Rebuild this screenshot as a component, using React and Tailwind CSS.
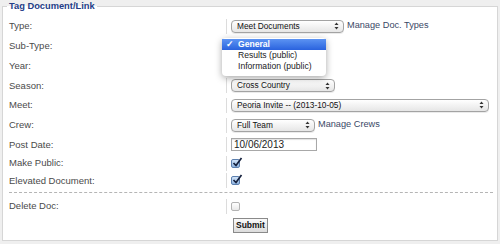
const font = { fontFamily: '"Liberation Sans", Arial, sans-serif' }

function Arrows() {
  return (
    <svg width="5" height="8" viewBox="0 0 5 8" className="shrink-0">
      <path d="M2.5 0.5 L4.5 3 L0.5 3 Z" fill="#333" />
      <path d="M2.5 7.5 L4.5 5 L0.5 5 Z" fill="#333" />
    </svg>
  )
}

function Select({ w, children }) {
  return (
    <div
      className="h-[13px] rounded-[4px] border border-[#a3a3a3] bg-gradient-to-b from-white to-[#e6e6e6] shadow-[0_1px_0_rgba(0,0,0,0.08)] flex items-center justify-between pl-[5px] pr-[4px] text-[8.3px] text-[#111] leading-none"
      style={{ width: w }}
    >
      <span>{children}</span>
      <Arrows />
    </div>
  )
}

function Check({ checked }) {
  return (
    <div
      className={
        'w-[9px] h-[9px] rounded-[2px] border relative ' +
        (checked
          ? 'border-[#5b7fae] bg-gradient-to-b from-[#d2e4f8] to-[#8fb4e0]'
          : 'border-[#b3b3b3] bg-gradient-to-b from-white to-[#e9e9e9]')
      }
    >
      {checked && (
        <svg width="11" height="11" viewBox="0 0 11 11" className="absolute left-[0px] top-[-3px]">
          <path d="M1.5 6 L4 8.5 L9.5 1" fill="none" stroke="#15213d" strokeWidth="1.7" />
        </svg>
      )}
    </div>
  )
}

function Row({ label, h = 20, line = true, children }) {
  return (
    <div className="flex items-center" style={{ height: h }}>
      <div className="w-[223px] pl-[6px] text-[9.5px] text-[#4a4a4a] leading-none">{label}</div>
      {line ? (
        <div className="h-[15px] border-l border-[#dcdcdc] pl-[4px] flex items-center gap-[3px]">{children}</div>
      ) : (
        <div className="pl-[4px] flex items-center">{children}</div>
      )}
    </div>
  )
}

function Link({ children }) {
  return <span className="text-[9.2px] text-[#3a4866] leading-none">{children}</span>
}

export default function App() {
  return (
    <div className="relative w-[500px] h-[244px] bg-[#efefef] overflow-hidden" style={font}>
      <fieldset className="ml-[2px] w-[496px] h-[241px] border border-[#d6d6d6] bg-white">
        <legend className="ml-[4px] px-[2px] text-[9.3px] font-bold text-[#243d87] leading-[12px]">
          Tag Document/Link
        </legend>
        <div className="pt-[4px]">
          <Row label="Type:">
            <Select w={113}>Meet Documents</Select>
            <Link>Manage Doc. Types</Link>
          </Row>
          <Row label="Sub-Type:" />
          <Row label="Year:" />
          <Row label="Season:" h={19}>
            <Select w={104}>Cross Country</Select>
          </Row>
          <Row label="Meet:">
            <Select w={258}>Peoria Invite -- (2013-10-05)</Select>
          </Row>
          <Row label="Crew:">
            <Select w={84}>Full Team</Select>
            <Link>Manage Crews</Link>
          </Row>
          <Row label="Post Date:" h={19}>
            <div className="w-[86px] h-[13px] border border-[#a8a8a8] shadow-[inset_0_1px_1px_rgba(0,0,0,0.12)] bg-white pl-[2px] text-[10px] text-[#222] leading-[11px]">
              10/06/2013
            </div>
          </Row>
          <Row label="Make Public:" h={18}>
            <Check checked />
          </Row>
          <Row label="Elevated Document:" h={17}>
            <Check checked />
          </Row>
          <div className="mt-[3px] mx-[6px] mr-[4px] border-t border-dashed border-[#b5b5b5]" />
          <div className="h-[4px]" />
          <Row label="Delete Doc:" h={18}>
            <Check />
          </Row>
          <Row label="" h={20} line={false}>
            <button className="ml-[3px] h-[15px] px-[2px] border border-[#8a8a8a] bg-gradient-to-b from-[#fafafa] to-[#dcdcdc] text-[8.5px] font-bold text-[#111] leading-none">
              Submit
            </button>
          </Row>
        </div>
      </fieldset>

      <div className="absolute left-[222px] top-[38px] w-[104px] h-[38px] bg-white rounded-[4px] shadow-[0_2px_7px_rgba(0,0,0,0.35)] pt-[1px] text-[8.6px] leading-none">
        <div className="h-[11px] flex items-center bg-gradient-to-b from-[#5c93f2] to-[#2a62de] text-white font-bold">
          <span className="w-[16px] pl-[4px] text-[9px]">✓</span>
          <span>General</span>
        </div>
        <div className="h-[11px] flex items-center pl-[16px] text-[#222]">Results (public)</div>
        <div className="h-[11px] flex items-center pl-[16px] text-[#222]">Information (public)</div>
      </div>
    </div>
  )
}
